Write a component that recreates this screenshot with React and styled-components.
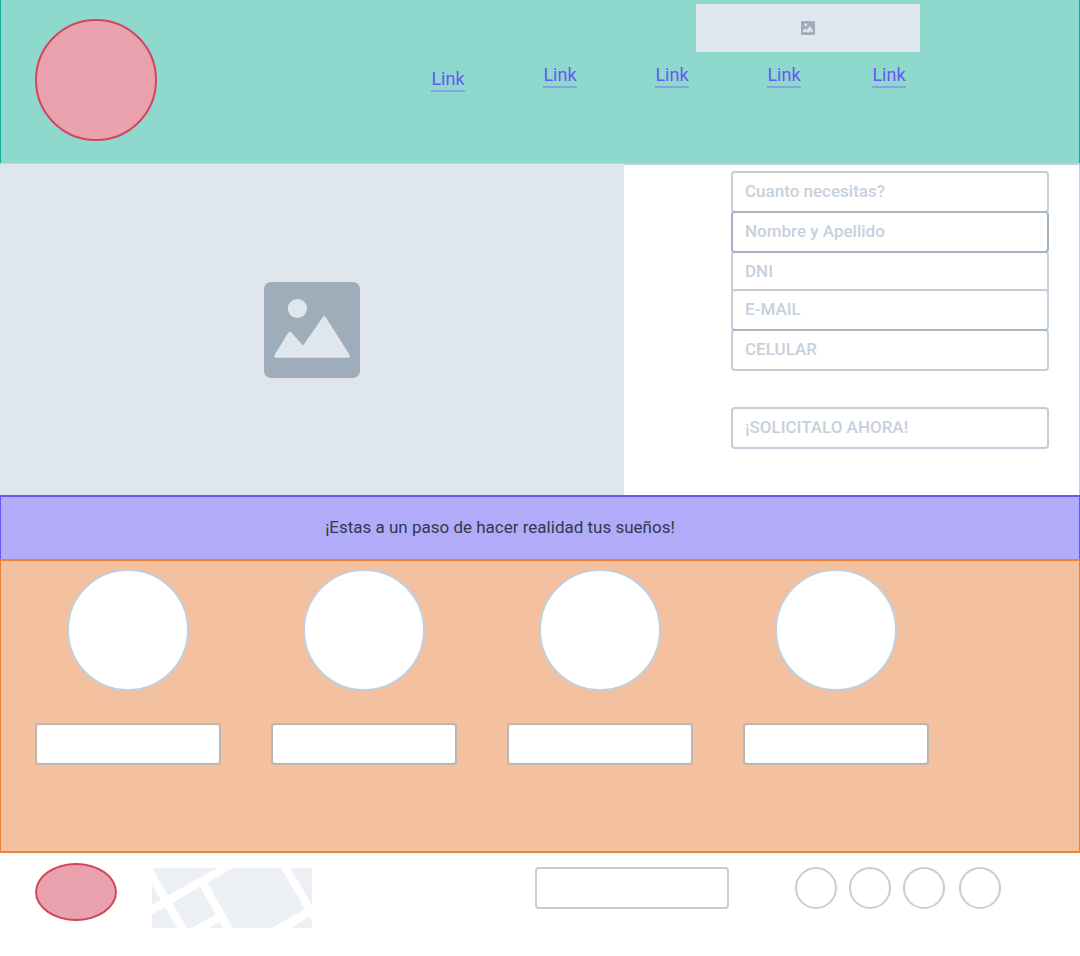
import React from "react";
import styled, { createGlobalStyle } from "styled-components";

const GlobalStyle = createGlobalStyle`
  *, *::before, *::after { box-sizing: border-box; }
  body {
    margin: 0;
    background: #ffffff;
    color: #2f3a4a;
    font-family: Roboto, "Liberation Sans", sans-serif;
    font-size: 17px;
    line-height: 24px;
  }
  input, button { font: inherit; }
`;

const Header = styled.header`
  display: flex;
  justify-content: space-between;
  align-items: flex-start;
  min-height: 163px;
  padding: 4px 159px 0 34px;
  background: #8ed8ce;
  border: solid #15ab9c;
  border-width: 0 1px;
`;

const Logo = styled.div`
  flex: none;
  width: ${(p) => (p.$small ? 82 : 122)}px;
  height: ${(p) => (p.$small ? 58 : 122)}px;
  margin-top: ${(p) => (p.$small ? 0 : 15)}px;
  background: #e9a2ad;
  border: 2px solid #d3455b;
  border-radius: 50%;
`;

const NavArea = styled.div`
  display: flex;
  flex-direction: column;
  gap: 12px;
`;

const Picture = styled.div`
  display: flex;
  align-items: center;
  justify-content: center;
  background: #dfe6ee;
`;

const Banner = styled(Picture)`
  align-self: flex-end;
  width: 224px;
  height: 48px;
`;

const Nav = styled.nav`
  display: grid;
  grid-template-columns: 112px 112px 112px 105px 48px;
  align-items: start;
  justify-items: start;
  height: 28px;
`;

const NavLink = styled.a`
  align-self: ${(p) => (p.$low ? "end" : "start")};
  width: 34px;
  height: 24px;
  line-height: 22px;
  font-size: 18px;
  text-align: center;
  color: #6558f5;
  text-decoration: none;
  border-bottom: 2px solid #80a5df;
`;

const Hero = styled.section`
  display: grid;
  grid-template-columns: 624fr 456fr;
  min-height: 332px;
`;

const HeroPicture = styled(Picture)`
  border-top: 1px solid #c3cfda;
`;

const Form = styled.form`
  display: flex;
  flex-direction: column;
  padding: 6px 30px 46px 107px;
  border: solid #c3cfda;
  border-width: 2px 1px 0 0;
`;

const Field = styled.input`
  position: relative;
  z-index: ${(p) => (p.$strong ? 1 : 0)};
  width: 100%;
  height: 42px;
  margin: 0 0 ${(p) => (p.$overlap || 0) * -1}px;
  padding: 0 12px 2px;
  color: #2f3a4a;
  font-weight: 500;
  background: #ffffff;
  border: 2px solid ${(p) => (p.$strong ? "#a6b3c2" : "#c3cfda")};
  border-radius: 4px;
  border-top-color: ${(p) => (p.$darkTop || p.$strong ? "#a9b6c5" : "#c3cfda")};
  outline: none;
  &::placeholder { color: #c6d1dc; opacity: 1; }
`;

const Submit = styled.button`
  height: 42px;
  margin-top: 36px;
  padding: 0 12px 2px;
  text-align: left;
  font-weight: 500;
  color: #c6d1dc;
  background: #ffffff;
  border: 2px solid #c3cfda;
  border-radius: 4px;
`;

const Message = styled.section`
  min-height: 64px;
  padding: 18px 80px 20px 0;
  text-align: center;
  background: #b2abfa;
  border: solid #6558f5;
  border-width: 2px 1px 0;
  p { margin: 0; }
`;

const Services = styled.section`
  display: flex;
  gap: 50px;
  min-height: 294px;
  padding: 8px 34px 0;
  background: #f3c19f;
  border: solid #e98437;
  border-width: 2px 1px;
`;

const Service = styled.div`
  display: flex;
  flex-direction: column;
  align-items: center;
  gap: 32px;
  width: 186px;
`;

const Circle = styled.div`
  width: 122px;
  height: 122px;
  background: #ffffff;
  border: 2px solid #c3cfda;
  border-radius: 50%;
`;

const ServiceField = styled(Field)`
  border-color: #bbb5b1;
`;

const Footer = styled.footer`
  display: flex;
  align-items: flex-start;
  padding: 10px 79px 28px 35px;
`;

const MapThumb = styled.svg`
  display: block;
  flex: none;
  margin: 5px auto 0 35px;
`;

const FooterField = styled(Field)`
  width: 194px;
  margin: 4px 66px 0 0;
`;

const Social = styled.div`
  display: grid;
  grid-template-columns: 54px 54px 56px 42px;
  margin-top: 4px;
`;

const SocialLink = styled.a`
  width: 42px;
  height: 42px;
  border: 2px solid #c3cfda;
  border-radius: 50%;
`;

const PictureIcon = ({ size }) => (
  <svg width={size} height={size} viewBox="0 0 96 96" aria-hidden="true">
    <rect width="96" height="96" rx="7" fill="#9eadb9" />
    <circle cx="33.4" cy="26.5" r="9.6" fill="#dfe6ee" />
    <path
      d="M12 74 25.8 51.5 39.3 66.3 60.2 36 84.3 74Z"
      fill="#dfe6ee"
      stroke="#dfe6ee"
      strokeWidth="3.4"
      strokeLinejoin="round"
    />
  </svg>
);

const links = ["inicio", "prestamos", "requisitos", "nosotros", "contacto"];

const fields = [
  { label: "Cuanto necesitas?", overlap: 2 },
  { label: "Nombre y Apellido", overlap: 2, strong: true },
  { label: "DNI", overlap: 4 },
  { label: "E-MAIL", overlap: 2 },
  { label: "CELULAR", darkTop: true },
];

export default function App() {
  return (
    <>
      <GlobalStyle />
      <Header>
        <Logo />
        <NavArea>
          <Banner>
            <PictureIcon size={14} />
          </Banner>
          <Nav>
            {links.map((id, i) => (
              <NavLink key={id} href={`#${id}`} $low={i === 0}>
                Link
              </NavLink>
            ))}
          </Nav>
        </NavArea>
      </Header>
      <main>
        <Hero>
          <HeroPicture>
            <PictureIcon size={96} />
          </HeroPicture>
          <Form onSubmit={(e) => e.preventDefault()}>
            {fields.map((f) => (
              <Field
                key={f.label}
                placeholder={f.label}
                aria-label={f.label}
                $overlap={f.overlap}
                $strong={f.strong}
                $darkTop={f.darkTop}
              />
            ))}
            <Submit type="submit">¡SOLICITALO AHORA!</Submit>
          </Form>
        </Hero>
        <Message>
          <p>¡Estas a un paso de hacer realidad tus sueños!</p>
        </Message>
        <Services>
          {[1, 2, 3, 4].map((n) => (
            <Service key={n}>
              <Circle />
              <ServiceField aria-label={`Servicio ${n}`} />
            </Service>
          ))}
        </Services>
      </main>
      <Footer>
        <Logo $small />
        <MapThumb width="160" height="60" viewBox="0 0 160 60" aria-hidden="true">
          <rect width="160" height="60" fill="#eceff4" />
          <g fill="#ffffff">
            <path d="M0 36.5 65 0H81L0 46.5Z" />
            <path d="M0 0 35 60H25L0 16.5Z" />
            <path d="M48 18.5 55 14 81 60H71Z" />
            <path d="M40 60 64 46 69 53 57 60Z" />
            <path d="M129 0H138L160 37V53Z" />
            <path d="M120 60 160 37V46L140 60Z" />
          </g>
        </MapThumb>
        <FooterField aria-label="Contacto" />
        <Social>
          {["facebook", "instagram", "twitter", "youtube"].map((name) => (
            <SocialLink key={name} href={`#${name}`} aria-label={name} />
          ))}
        </Social>
      </Footer>
    </>
  );
}
